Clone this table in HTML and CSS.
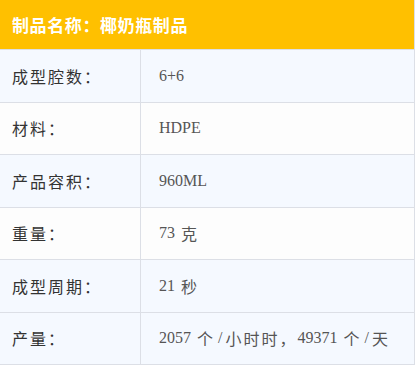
FILE: index.html
```html
<!DOCTYPE html>
<html lang="zh-CN">
<head>
<meta charset="utf-8">
<link rel="stylesheet" href="styles.css">
</head>
<body>
<div class="spec">
  <div class="spec-head">制品名称：椰奶瓶制品</div>
  <div class="spec-row alt">
    <div class="spec-label">成型腔数：</div>
    <div class="spec-value">6+6</div>
  </div>
  <div class="spec-row">
    <div class="spec-label">材料：</div>
    <div class="spec-value">HDPE</div>
  </div>
  <div class="spec-row alt">
    <div class="spec-label">产品容积：</div>
    <div class="spec-value">960ML</div>
  </div>
  <div class="spec-row">
    <div class="spec-label">重量：</div>
    <div class="spec-value">73 <span class="zh">克</span></div>
  </div>
  <div class="spec-row alt">
    <div class="spec-label">成型周期：</div>
    <div class="spec-value">21 <span class="zh">秒</span></div>
  </div>
  <div class="spec-row alt">
    <div class="spec-label">产量：</div>
    <div class="spec-value">2057 <span class="zh">个</span><span class="sl">/</span><span class="zh">小时时，</span>49371 <span class="zh">个</span><span class="sl">/</span><span class="zh">天</span></div>
  </div>
</div>
</body>
</html>
```

FILE: styles.css
```css
html, body {
  margin: 0;
  padding: 0;
  background: #ffffff;
}

.spec {
  width: 414px;
  border-right: 1px solid #dcdfe6;
  font-family: "Noto Sans CJK SC", sans-serif;
}

.spec-head {
  height: 49px;
  display: flex;
  align-items: center;
  padding-left: 12px;
  background: #ffc000;
  color: #ffffff;
  font-size: 17px;
  font-weight: bold;
  letter-spacing: 0.6px;
  border-bottom: 1px solid #dcdfe6;
}

.spec-row {
  display: grid;
  grid-template-columns: 141px 1fr;
  height: 51.5px;
  border-bottom: 1px solid #dcdfe6;
  background: #fdfdfd;
}

.spec-row.alt {
  background: #f5f9ff;
}

.spec-label {
  display: flex;
  align-items: center;
  padding-left: 12px;
  border-right: 1px solid #dcdfe6;
  color: #333333;
  font-size: 16px;
  letter-spacing: 2px;
}

.spec-value {
  display: flex;
  align-items: center;
  padding-left: 18px;
  color: #555555;
  font-family: "Liberation Serif", "Noto Sans CJK SC", serif;
  font-size: 16px;
  word-spacing: 2px;
  white-space: pre;
}

.zh {
  font-family: "Noto Sans CJK SC", sans-serif;
  letter-spacing: 2px;
}

.sl {
  padding: 0 3px;
}
```
